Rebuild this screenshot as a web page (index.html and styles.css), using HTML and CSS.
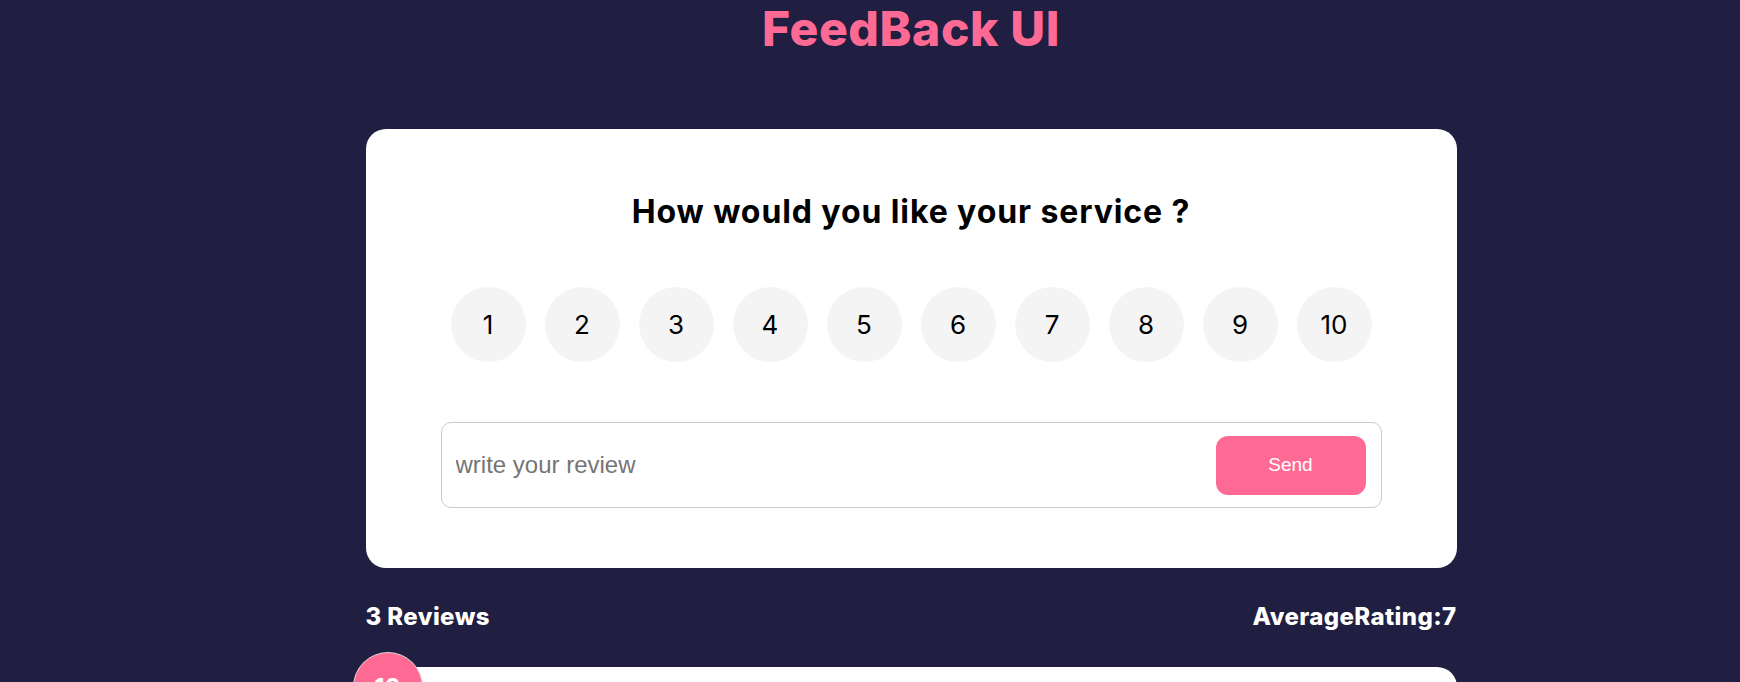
FILE: index.html
```html
<!DOCTYPE html>
<html lang="en">
<head>
<meta charset="utf-8">
<title>FeedBack UI</title>
<link rel="stylesheet" href="styles.css">
</head>
<body>
<h1 class="title">FeedBack UI</h1>
<main class="container">
  <section class="card">
    <h2 class="question">How would you like your service ?</h2>
    <ul class="ratings">
      <li class="rate">1</li>
      <li class="rate">2</li>
      <li class="rate">3</li>
      <li class="rate">4</li>
      <li class="rate">5</li>
      <li class="rate">6</li>
      <li class="rate">7</li>
      <li class="rate">8</li>
      <li class="rate">9</li>
      <li class="rate">10</li>
    </ul>
    <form class="review-form">
      <input class="review-input" type="text" placeholder="write your review">
      <button class="send" type="button">Send</button>
    </form>
  </section>
  <div class="stats">
    <span class="stat">3 Reviews</span>
    <span class="stat">AverageRating:7</span>
  </div>
  <article class="review">
    <span class="badge">10</span>
    <p class="review-text">This is a great service</p>
  </article>
</main>
</body>
</html>
```

FILE: styles.css
```css
* { box-sizing: border-box; }
html, body { height: 100%; }
body {
  margin: 0;
  padding-left: 82px;
  background: #201f41;
  font-family: Inter, "Noto Sans", sans-serif;
  overflow: hidden;
}
.title {
  margin: 0;
  padding-top: 1px;
  text-align: center;
  color: #ff6a95;
  font-size: 48px;
  font-weight: 800;
  line-height: 56px;
  letter-spacing: 0.6px;
}
.container {
  width: 1091px;
  margin: 0 auto;
  padding-top: 72px;
}
.card {
  background: #fff;
  border-radius: 20px;
  padding: 63px 75px 60px;
}
.question {
  margin: 0;
  text-align: center;
  font-size: 32px;
  font-weight: 700;
  line-height: 40px;
  letter-spacing: 0.9px;
  color: #000;
}
.ratings {
  list-style: none;
  margin: 55px 0 0;
  padding: 0;
  display: flex;
  justify-content: center;
  gap: 19px;
}
.rate {
  width: 75px;
  height: 75px;
  border-radius: 50%;
  background: #f4f4f4;
  display: flex;
  align-items: center;
  justify-content: center;
  font-size: 26px;
  font-weight: 400;
  color: #000;
}
.review-form {
  margin-top: 60px;
  height: 86px;
  border: 1px solid #ccc;
  border-radius: 10px;
  display: flex;
  align-items: center;
  padding: 0 15px 0 14px;
}
.review-input {
  flex: 1;
  border: none;
  outline: none;
  font-family: "Liberation Sans", Arial, sans-serif;
  font-size: 24px;
  color: #333;
  background: transparent;
  padding: 0;
}
.review-input::placeholder { color: #757575; }
.send {
  width: 150px;
  height: 59px;
  border: none;
  border-radius: 12px;
  background: #ff6a95;
  color: #fff;
  font-family: "Liberation Sans", Arial, sans-serif;
  font-size: 19px;
}
.stats {
  display: flex;
  justify-content: space-between;
  align-items: center;
  margin-top: 34px;
  color: #fff;
  font-size: 24px;
  font-weight: 800;
  line-height: 30px;
  letter-spacing: 0.4px;
}
.review {
  position: relative;
  margin-top: 35px;
  background: #fff;
  border-radius: 20px;
  min-height: 120px;
  padding: 30px 40px;
}
.badge {
  position: absolute;
  left: -13px;
  top: -15px;
  width: 70px;
  height: 70px;
  border-radius: 50%;
  background: #ff6a95;
  border: 1px solid #ddd;
  color: #fff;
  font-size: 24px;
  font-weight: 700;
  display: flex;
  align-items: center;
  justify-content: center;
}
.review-text { margin: 0; }
```
